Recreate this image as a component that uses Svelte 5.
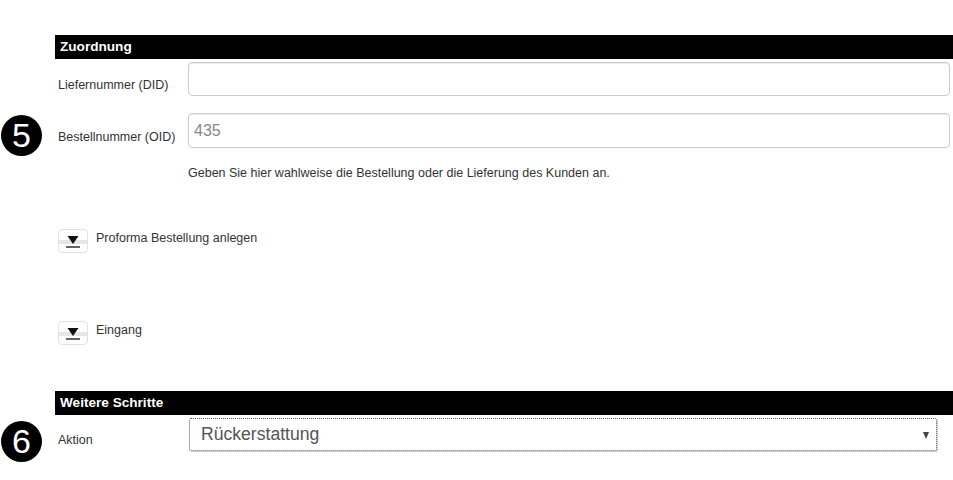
<script lang="ts">
  let oid = $state("");
  let did = $state("");
  let proforma = $state(false);
  let eingang = $state(false);
  let aktion = $state("Rückerstattung");
</script>

{#snippet toggle(open: boolean, onclick: () => void)}
  <button class="toggle" class:open {onclick} aria-label="Umschalten">
    <svg width="14" height="12" viewBox="0 0 14 12">
      <path d="M1.5 0h11L7 8z" fill="#111" />
      <path d="M0 11h14" stroke="#222" stroke-width="1.4" />
    </svg>
  </button>
{/snippet}

<main class="page">
  <h2 class="bar first">Zuordnung</h2>

  <div class="row did">
    <label for="did">Liefernummer (DID)</label>
    <input id="did" bind:value={did} />
  </div>
  <div class="row oid">
    <span class="badge">5</span>
    <label for="oid">Bestellnummer (OID)</label>
    <input id="oid" placeholder="435" bind:value={oid} />
  </div>
  <p class="help">Geben Sie hier wahlweise die Bestellung oder die Lieferung des Kunden an.</p>

  <div class="collapse proforma">
    {@render toggle(proforma, () => (proforma = !proforma))}
    <span>Proforma Bestellung anlegen</span>
  </div>
  <div class="collapse eingang">
    {@render toggle(eingang, () => (eingang = !eingang))}
    <span>Eingang</span>
  </div>

  <h2 class="bar second">Weitere Schritte</h2>
  <div class="row action">
    <span class="badge">6</span>
    <label for="aktion">Aktion</label>
    <div class="select">
      <select id="aktion" bind:value={aktion}>
        <option>Rückerstattung</option>
        <option>Ersatzlieferung</option>
      </select>
      <span class="arrow"></span>
    </div>
  </div>
</main>

<style>
  :global(body) {
    background: #fff;
    font-family: "Liberation Sans", Arial, sans-serif;
  }

  .page {
    height: 480px;
    box-sizing: border-box;
    padding: 35px 0 0 55px;
    overflow: hidden;
    font-size: 12.5px;
    color: #333;
  }

  .bar {
    margin: 0;
    height: 24px;
    padding-left: 5px;
    background: #000;
    color: #fff;
    font-size: 13.6px;
    font-weight: 700;
    line-height: 23px;
  }

  .row {
    position: relative;
    display: flex;
    align-items: center;
  }

  .row label {
    width: 133px;
    padding-left: 3px;
    box-sizing: border-box;
    flex: none;
    position: relative;
    top: 6px;
  }

  .did {
    margin-top: 3px;
  }

  .oid {
    margin-top: 17px;
  }

  input {
    flex: none;
    width: 762px;
    height: 34px;
    box-sizing: border-box;
    padding: 0 5px;
    border: 1px solid #ccc;
    border-radius: 4px;
    background: #fff;
    box-shadow: inset 0 1px 1px rgba(0, 0, 0, 0.075);
    font: 16px "Liberation Sans", Arial, sans-serif;
    color: #555;
  }

  .oid input {
    height: 35px;
  }

  input::placeholder {
    color: #888;
    opacity: 1;
  }

  .help {
    margin: 18px 0 0 133px;
    line-height: 15px;
  }

  .badge {
    position: absolute;
    left: -54px;
    top: 2px;
    width: 41px;
    height: 41px;
    border-radius: 50%;
    background: #000;
    color: #fff;
    font-size: 34px;
    line-height: 41px;
    text-align: center;
  }

  .collapse {
    display: flex;
    align-items: flex-start;
    gap: 8px;
    padding-left: 3px;
  }

  .collapse span {
    position: relative;
    top: 2px;
  }

  .proforma {
    margin-top: 48px;
  }

  .eingang {
    margin-top: 68px;
  }

  .toggle {
    width: 30px;
    height: 24px;
    padding: 6px 0 0;
    display: flex;
    justify-content: center;
    align-items: flex-start;
    border: 1px solid #dde5dd;
    border-radius: 4px;
    background: linear-gradient(#fff 0 45%, #e6e6e6 45% 62%, #fff 62%);
    cursor: pointer;
  }

  .second {
    margin-top: 46px;
  }

  .action {
    margin-top: 3px;
    height: 33px;
  }

  .action .badge {
    top: 3px;
  }

  .action label {
    top: 5px;
    width: 134px;
  }

  .select {
    position: relative;
    flex: none;
    width: 748px;
    height: 33px;
  }

  select {
    appearance: none;
    width: 100%;
    height: 100%;
    box-sizing: border-box;
    padding: 0 11px 2px;
    border: 1px dotted #555;
    outline: none;
    border-radius: 2px;
    background: #fff;
    box-shadow: 1px 1px 0 #ccc;
    font: 17.6px "Liberation Sans", Arial, sans-serif;
    color: #555;
  }

  .arrow {
    position: absolute;
    right: 8px;
    top: 14px;
    border-style: solid;
    border-width: 7px 3.5px 0;
    border-color: #444 transparent transparent;
    pointer-events: none;
  }
</style>
